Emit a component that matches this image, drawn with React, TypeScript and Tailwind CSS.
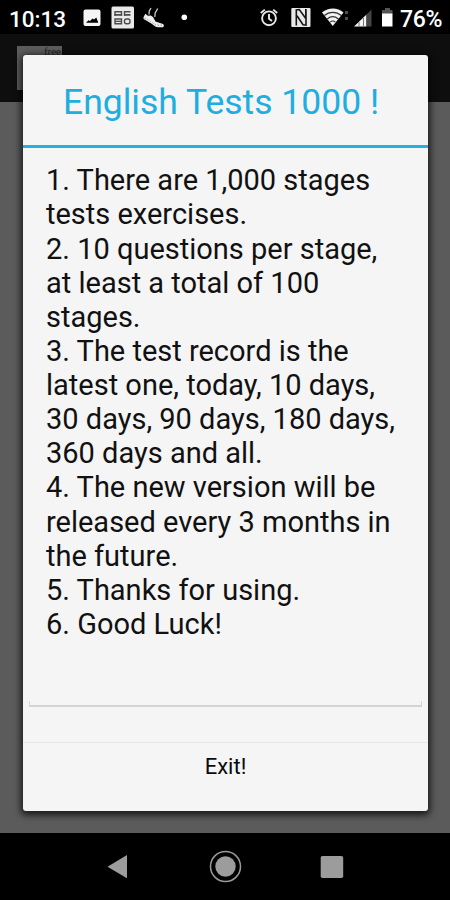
const lines = [
  '1. There are 1,000 stages',
  'tests exercises.',
  '2. 10 questions per stage,',
  'at least a total of 100',
  'stages.',
  '3. The test record is the',
  'latest one, today, 10 days,',
  '30 days, 90 days, 180 days,',
  '360 days and all.',
  '4. The new version will be',
  'released every 3 months in',
  'the future.',
  '5. Thanks for using.',
  '6. Good Luck!',
];

function NotificationIcons() {
  return (
    <svg className="absolute left-0 top-0" width="225" height="34" viewBox="0 0 225 34">
      <path fill="#f5f5f5" fillRule="evenodd" d="M85.500 9.500h13a2 2 0 0 1 2 2v12.500a2 2 0 0 1-2 2h-13a2 2 0 0 1-2-2v-12.500a2 2 0 0 1 2-2zM86 22.800h12.300l-2-5.300-2.300 2-1.500-1-2.500 2.500-1.500-.8z" />
      <rect x="111.500" y="6.500" width="22.500" height="22" rx="1.500" fill="#e9e9e9" />
      <g fill="none" stroke="#4a4a4a" strokeWidth="1.400">
        <path d="M115 16v-4.300h6.500V16M124.500 16v-4.300h6" />
        <path d="M115 19h6.500v4.800H115zM115 21.400h6.500" />
        <rect x="124.500" y="19" width="5.500" height="4.800" rx="2" />
        <path d="M114.500 14.800h6.500M124.500 14.800h6" strokeWidth="1.800" />
      </g>
      <path fill="#eee" d="M145.300 13.800l2.500 2 3-.3 2.200 1.500 2.500 4.500 7.500 2.500c1.200.8 1.200 3-.3 3.200h-4.500c-2.500 0-4.200-1.800-6.500-3.500l-5.500-3.200c-2-.8-3.200-1.500-2.700-3.200z" />
      <path stroke="#c9c9c9" strokeWidth="1.300" fill="none" d="M149 14.500l.3-3.500 1.700-3M154.800 17l.4-4 2.500-4.500" />
      <path stroke="#999" strokeWidth="1" strokeDasharray="1.500 1.500" fill="none" d="M144.500 18.200l6 3.200 5.500 3.800h6" />
      <circle cx="184.300" cy="17.300" r="2.800" fill="#fff" />
    </svg>
  );
}

function SystemIcons() {
  return (
    <svg className="absolute left-[225px] top-0" width="225" height="34" viewBox="225 0 225 34">
      <g fill="none" stroke="#e8e8e8" strokeWidth="1.900">
        <circle cx="269" cy="18.300" r="6.900" />
        <path d="M260.800 13l4-3.400M277.200 13l-4-3.400M269 14v4.700l3 2.300" />
      </g>
      <rect x="291.300" y="8" width="19.200" height="19" rx="1" fill="#e8e8e8" />
      <path d="M296.300 25.500V10l3-.5 6.500 9V9M306 9.500v15.500l-3-.3-6-9" fill="none" stroke="#161616" strokeWidth="1.600" />
      <path fill="#f2f2f2" d="M322 12.500c6.300-5.300 15.500-5.300 21.500 0L332.800 26z" />
      <path fill="none" stroke="#333" strokeWidth="1.200" d="M324.300 15.500c5-4.300 12-4.300 17 0M327.200 19c3.500-2.800 7.800-2.800 11.200 0M330.300 22c1.500-1.200 3.500-1.200 5 0" />
      <path fill="#4c4c4c" d="M345 11h3v3h-3zM345 17h3v3h-3z" />
      <path fill="#f5f5f5" d="M354 26.500L366.500 14.500v12z" />
      <path fill="#454545" d="M366.500 14.500l5-5v17h-5z" />
      <path stroke="#777" strokeWidth="1" d="M359 22v4.500M363.500 18v8.500" />
      <path fill="#555" d="M385 8h5v2h2.500v4H382v-4h3z" />
      <path fill="#fff" d="M382 13.500h10.500v13H382z" />
    </svg>
  );
}

function StatusBar() {
  return (
    <header className="relative h-[34px] shrink-0 bg-black text-white">
      <NotificationIcons />
      <SystemIcons />
      <div className="flex h-[34px] items-center justify-between pl-[9px] pr-[8px] pt-[4px]">
        <span className="text-[22.5px] font-medium leading-none">10:13</span>
        <span className="text-[23px] font-medium leading-none tracking-[-0.4px]">76%</span>
      </div>
    </header>
  );
}

function InfoDialog() {
  return (
    <section className="absolute left-[23px] top-[55px] flex h-[756px] w-[405px] flex-col rounded-[3px] bg-[#f5f5f5] shadow-[0_2px_7px_2px_rgba(0,0,0,0.75)]">
      <h1 className="h-[90px] shrink-0 whitespace-nowrap pl-[40px] pt-[25px] text-[35.5px] leading-[44px] text-[#20aee0]">English Tests 1000 !</h1>
      <div className="h-[3px] shrink-0 bg-[#25b1df]" />
      <div className="h-[548px] shrink-0 pl-[23px] pt-[15.3px] text-[29px] leading-[34.13px] text-[#111]">
        {lines.map((line) => (
          <p key={line} className="whitespace-nowrap">{line}</p>
        ))}
      </div>
      <div className="mx-[6px] mt-[5px] h-[6px] shrink-0 border-x border-b-2 border-[#d4d4d4]" />
      <div className="mt-[35px] h-px shrink-0 bg-[#e6e6e6]" />
      <button className="flex-1 pb-[21px] text-center text-[22px] leading-none text-[#0b0b0b]">Exit!</button>
    </section>
  );
}

function NavigationBar() {
  return (
    <nav className="h-[67px] shrink-0 bg-black">
      <svg width="450" height="67" viewBox="0 833 450 67" className="block">
        <path d="M107.500 866.800L127 855v23.200z" fill="#9c9c9c" />
        <circle cx="225.500" cy="866.500" r="15" fill="none" stroke="#999" strokeWidth="1.500" />
        <circle cx="225.500" cy="866.500" r="10.200" fill="#9c9c9c" />
        <rect x="320.700" y="856" width="22.500" height="22" rx="1.800" fill="#9c9c9c" />
      </svg>
    </nav>
  );
}

export default function App() {
  return (
    <div className="relative flex h-[900px] w-[450px] flex-col overflow-hidden bg-[#5b5b5b] font-['Roboto',sans-serif]">
      <StatusBar />
      <div className="h-[68px] shrink-0 bg-[#0e0e0e] pl-[17px] pt-[12px]">
        <div className="h-[44px] w-[45px] bg-[#5c5c5c] pr-px text-right font-['Liberation_Serif',serif] text-[11px] leading-[10px] text-[#222]">free</div>
      </div>
      <main className="flex-1 bg-[#5b5b5b]" />
      <NavigationBar />
      <InfoDialog />
    </div>
  );
}
